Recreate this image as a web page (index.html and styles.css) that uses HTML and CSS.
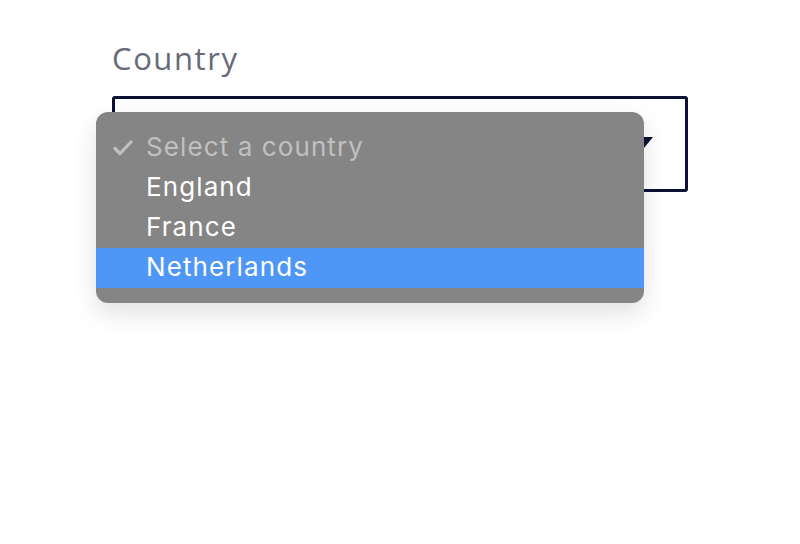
FILE: index.html
```html
<!DOCTYPE html>
<html>
<head>
<meta charset="utf-8">
<link rel="stylesheet" href="styles.css">
</head>
<body>
<div class="page">
  <div class="field">
    <label class="label">Country</label>
    <div class="control">
      <div class="select">
        <svg class="arrow" width="18" height="12" viewBox="0 0 18 12"><path d="M0 0 L18 0 L9 11 Z" fill="#0b1036"/></svg>
      </div>
      <ul class="menu">
        <li class="item disabled"><svg class="check" width="20" height="16" viewBox="0 0 20 16"><path d="M2 8.5 L7 13.5 L18 2" fill="none" stroke="currentColor" stroke-width="3.2" stroke-linecap="round" stroke-linejoin="round"/></svg>Select a country</li>
        <li class="item">England</li>
        <li class="item">France</li>
        <li class="item active">Netherlands</li>
      </ul>
    </div>
  </div>
</div>
</body>
</html>
```
FILE: styles.css
```css
html, body { margin: 0; padding: 0; background: #fff; }
.page { padding: 38px 0 0 112px; min-height: 544px; box-sizing: border-box; }
.field { width: 576px; }
.label {
  display: block;
  font-family: "Open Sans", sans-serif;
  font-size: 31px;
  line-height: 40px;
  letter-spacing: 1.6px;
  color: #676a78;
  margin-bottom: 18px;
}
.control { display: grid; }
.select {
  grid-area: 1 / 1;
  box-sizing: border-box;
  height: 96px;
  border: 3px solid #0b1036;
  border-radius: 3px;
  position: relative;
}
.arrow { position: absolute; left: 520px; top: 38px; }
.menu {
  grid-area: 1 / 1;
  position: relative;
  z-index: 1;
  align-self: start;
  margin: 16px 0 0 -16px;
  width: 548px;
  padding: 16px 0 15px;
  list-style: none;
  background: #858585;
  border-radius: 12px;
  box-shadow: 0 10px 24px rgba(0,0,0,0.12);
  font-family: Inter, sans-serif;
  font-size: 26px;
  letter-spacing: 1.1px;
  color: #fff;
}
.item {
  height: 40px;
  line-height: 38px;
  padding-left: 50px;
  position: relative;
}
.item.disabled { color: #c0c0c0; }
.item.active { background: #4f97f6; }
.check { position: absolute; left: 17px; top: 12px; color: #c0c0c0; }
```
